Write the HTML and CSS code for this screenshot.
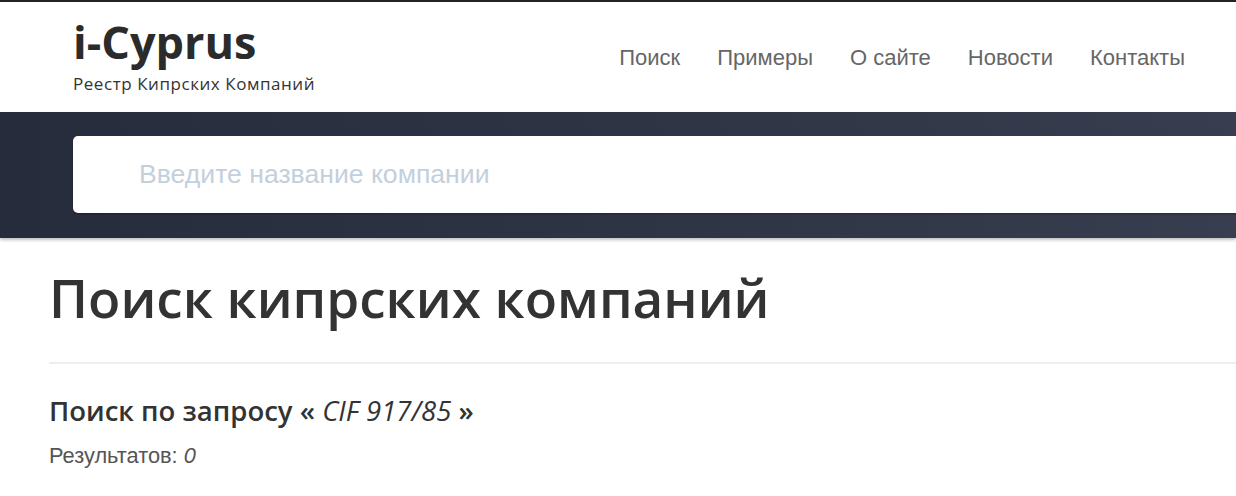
FILE: index.html
```html
<!DOCTYPE html>
<html lang="ru">
<head>
<meta charset="utf-8">
<title>i-Cyprus</title>
<link rel="stylesheet" href="styles.css">
</head>
<body>
<header class="header">
  <div class="brand">
    <div class="logo">i-Cyprus</div>
    <div class="tagline">Реестр Кипрских Компаний</div>
  </div>
  <nav class="nav">
    <a href="#">Поиск</a>
    <a href="#">Примеры</a>
    <a href="#">О сайте</a>
    <a href="#">Новости</a>
    <a href="#">Контакты</a>
  </nav>
</header>
<section class="band">
  <div class="search">
    <input class="search-input" type="text" placeholder="Введите название компании">
  </div>
</section>
<main class="main">
  <h1 class="title">Поиск кипрских компаний</h1>
  <hr class="rule">
  <h2 class="query">Поиск по запросу « <em>CIF 917/85</em> »</h2>
  <p class="count">Результатов: <em>0</em></p>
</main>
</body>
</html>
```
FILE: styles.css
```css
* { box-sizing: border-box; }
html, body { margin: 0; padding: 0; }
body {
  background: #fff;
  font-family: "Open Sans", "Noto Sans", sans-serif;
  color: #333;
  overflow: hidden;
  width: 1236px;
}
.header {
  border-top: 2px solid #222;
  height: 112px;
  display: flex;
  justify-content: space-between;
  align-items: flex-start;
  padding: 0 0 0 73px;
}
.brand { padding-top: 15px; }
.logo {
  font-size: 45px;
  font-weight: 700;
  color: #2b2b2b;
  line-height: 50px;
}
.tagline {
  font-size: 17px;
  color: #333;
  line-height: 22px;
  letter-spacing: 0.55px;
  margin-top: 6px;
}
.nav {
  display: flex;
  padding-top: 43px;
  padding-right: 51px;
}
.nav a {
  font-family: "Liberation Sans", Arial, sans-serif;
  font-size: 22px;
  color: #666;
  text-decoration: none;
  margin-left: 37px;
  line-height: 26px;
}
.band {
  height: 126px;
  background: linear-gradient(90deg, #272c3c 0%, #2f3444 50%, #383d4f 100%);
  padding: 24px 0 0 73px;
  overflow: hidden;
  box-shadow: 0 2px 3px rgba(0,0,0,0.25);
  position: relative;
}
.search { width: 1300px; }
.search-input {
  width: 100%;
  height: 77px;
  border: 0;
  border-radius: 5px;
  background: #fff;
  padding: 0 0 0 66px;
  font-family: "Liberation Sans", Arial, sans-serif;
  font-size: 26.6px;
  outline: none;
  box-shadow: 0 1px 2px rgba(0,0,0,0.3);
}
.search-input::placeholder { color: #c3d0dc; }
.main { padding: 0 0 0 49px; }
.title {
  margin: 30px 0 0;
  font-size: 53px;
  font-weight: 600;
  line-height: 60px;
  color: #333;
}
.rule {
  margin: 34px 0 0;
  border: 0;
  border-top: 2px solid #eee;
}
.query {
  margin: 30px 0 0;
  font-size: 27.5px;
  font-weight: 600;
  line-height: 34px;
  color: #333;
}
.query em { font-weight: 500; }
.count {
  margin: 15px 0 0;
  font-family: "Liberation Sans", Arial, sans-serif;
  font-size: 21.8px;
  color: #555;
  line-height: 26px;
}
```
